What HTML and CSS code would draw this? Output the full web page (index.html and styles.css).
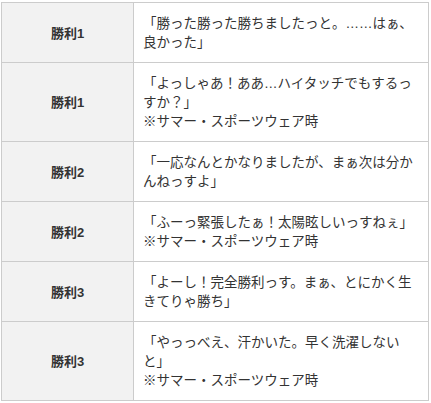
FILE: index.html
```html
<!DOCTYPE html>
<html lang="ja">
<head>
<meta charset="utf-8">
<link rel="stylesheet" href="styles.css">
</head>
<body>
<div class="wrap">
<table class="lines">
<tbody>
<tr><th>勝利1</th><td>「勝った勝った勝ちましたっと。……はぁ、良かった」</td></tr>
<tr><th>勝利1</th><td>「よっしゃあ！ああ…ハイタッチでもするっすか？」<br>※サマー・スポーツウェア時</td></tr>
<tr><th>勝利2</th><td>「一応なんとかなりましたが、まぁ次は分かんねっすよ」</td></tr>
<tr><th>勝利2</th><td>「ふーっ緊張したぁ！太陽眩しいっすねぇ」<br>※サマー・スポーツウェア時</td></tr>
<tr><th>勝利3</th><td>「よーし！完全勝利っす。まぁ、とにかく生きてりゃ勝ち」</td></tr>
<tr><th>勝利3</th><td>「やっっべえ、汗かいた。早く洗濯しないと」<br>※サマー・スポーツウェア時</td></tr>
</tbody>
</table>
</div>
</body>
</html>
```
FILE: styles.css
```css
html, body {
  margin: 0;
  padding: 0;
  background: #fff;
}
.wrap {
  padding: 2px 0 0 1px;
}
.lines {
  border-collapse: collapse;
  width: 428px;
  font-family: "Liberation Sans", "Noto Sans CJK JP", sans-serif;
  font-size: 13.5px;
  line-height: 19px;
  color: #333;
}
.lines th,
.lines td {
  border: 1px solid #ccc;
  padding: 11px 9px 10px;
  vertical-align: middle;
}
.lines th {
  width: 113px;
  background: #f2f2f2;
  font-weight: bold;
  font-size: 13px;
  text-align: center;
}
.lines td {
  text-align: left;
}
```
